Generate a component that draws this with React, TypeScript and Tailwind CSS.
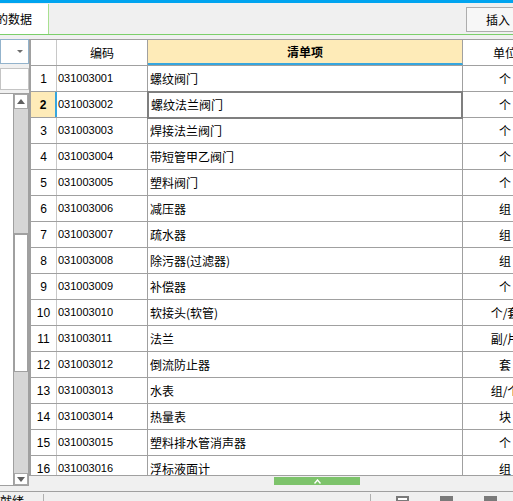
import React from "react";

const rows: [string, string, string][] = [
  ["031003001", "螺纹阀门", "个"],
  ["031003002", "螺纹法兰阀门", "个"],
  ["031003003", "焊接法兰阀门", "个"],
  ["031003004", "带短管甲乙阀门", "个"],
  ["031003005", "塑料阀门", "个"],
  ["031003006", "减压器", "组"],
  ["031003007", "疏水器", "组"],
  ["031003008", "除污器(过滤器)", "组"],
  ["031003009", "补偿器", "个"],
  ["031003010", "软接头(软管)", "个/套"],
  ["031003011", "法兰", "副/片"],
  ["031003012", "倒流防止器", "套"],
  ["031003013", "水表", "组/个"],
  ["031003014", "热量表", "块"],
  ["031003015", "塑料排水管消声器", "个"],
  ["031003016", "浮标液面计", "组"],
];

const cjk = { fontFamily: '"Noto Sans CJK SC", "Liberation Sans", sans-serif' };
const num = { fontFamily: '"Liberation Sans", Arial, sans-serif' };

export default function App() {
  return (
    <div
      className="w-[513px] h-[501px] overflow-hidden bg-[#f0f0f0] flex flex-col text-black"
      style={cjk}
    >
      {/* top blue bar */}
      <div className="h-[3px] bg-[#00a4ef] shrink-0" />
      {/* tab bar */}
      <div className="h-[32px] shrink-0 flex border-b border-[#7ccf6a]">
        <div className="mt-[1px] h-[30px] w-[49px] shrink-0 bg-white border-r border-[#a8e090] flex items-center overflow-hidden">
          <span className="ml-[-4px] text-[12px] leading-none whitespace-nowrap">的数据</span>
        </div>
        <div className="flex-1" />
        <div className="mt-[4px] h-[25px] w-[60px] mr-[-13px] shrink-0 border border-[#adadad] bg-[#f7f7f7] flex items-center pl-[19px]">
          <span className="text-[12px] leading-none whitespace-nowrap">插入</span>
        </div>
      </div>
      {/* main */}
      <div className="h-[456px] shrink-0 flex">
        {/* left panel */}
        <div className="w-[29px] shrink-0 flex flex-col pt-[4px]">
          <div className="h-[25px] w-[29px] border border-[#93b3cc] bg-white flex items-center justify-end pr-[5px]">
            <svg width="6" height="4" viewBox="0 0 6 4">
              <path d="M0 0 L6 0 L3 3 Z" fill="#6d6d6d" />
            </svg>
          </div>
          <div className="mt-[4px] h-[22px] w-[29px] border border-[#c4c4c4] bg-white" />
          <div className="mt-[3px] h-[393px] w-[29px] border-y border-r border-[#a0a0a0] bg-white flex">
            <div className="w-[13px] shrink-0 bg-white" />
            <div className="w-[15px] shrink-0 border-l border-[#a0a0a0] bg-[#d6d6d6] flex flex-col">
              <div className="h-[15px] shrink-0 bg-white border border-[#a8a8a8] flex items-center justify-center">
                <svg width="8" height="5" viewBox="0 0 8 5">
                  <path d="M0 5 L8 5 L4 0 Z" fill="#606060" />
                </svg>
              </div>
              <div className="h-[124px] shrink-0" />
              <div className="h-[139px] shrink-0 bg-white border-t-2 border-x border-b border-[#a0a0a0]" />
              <div className="flex-1" />
              <div className="h-[12px] shrink-0 bg-white border border-[#a8a8a8] flex items-center justify-center">
                <svg width="8" height="5" viewBox="0 0 8 5">
                  <path d="M0 0 L8 0 L4 5 Z" fill="#606060" />
                </svg>
              </div>
            </div>
          </div>
        </div>
        {/* grid side */}
        <div className="flex-1 min-w-0 flex flex-col pt-[4px]">
          <div className="h-[437px] shrink-0 border-y border-[#a0a0a0] border-l-2 border-l-[#a0a0a0] overflow-hidden bg-white">
            {/* header */}
            <div className="h-[26px] flex border-b border-[#a0a0a0]">
              <div className="w-[26px] shrink-0 border-r border-[#c8c8c8]" />
              <div className="w-[91px] shrink-0 border-r border-[#a0a0a0] flex items-center justify-center text-[12px]">
                编码
              </div>
              <div className="w-[315px] shrink-0 border-r border-[#a0a0a0] bg-[#feebb8] border-b-2 border-b-[#36a6de] flex items-center justify-center text-[12px] font-bold">
                清单项
              </div>
              <div className="w-[84px] shrink-0 flex items-center justify-center text-[12px] whitespace-nowrap">
                单位
              </div>
            </div>
            {rows.map(([code, name, unit], i) => {
              const sel = i === 1;
              return (
                <div key={code} className="h-[26px] flex border-b border-[#a0a0a0]">
                  <div
                    className={
                      sel
                        ? "w-[26px] shrink-0 border-r-2 border-[#36a6de] bg-[#feebb8] flex items-center justify-center text-[12px] font-bold"
                        : "w-[26px] shrink-0 border-r border-[#c8c8c8] flex items-center justify-center text-[12px]"
                    }
                    style={num}
                  >
                    {i + 1}
                  </div>
                  <div
                    className="w-[91px] shrink-0 border-r border-[#a0a0a0] flex items-center pl-[1px] text-[11px]"
                    style={num}
                  >
                    {code}
                  </div>
                  <div
                    className={
                      sel
                        ? "w-[316px] ml-[-1px] h-[28px] mt-[-1px] shrink-0 border-2 border-[#7f7f7f] flex items-center pl-[2px] text-[12px] whitespace-nowrap relative"
                        : "w-[315px] shrink-0 border-r border-[#a0a0a0] flex items-center pl-[2px] text-[12px] whitespace-nowrap"
                    }
                  >
                    {name}
                  </div>
                  <div className="w-[84px] shrink-0 flex items-center justify-center text-[12px] whitespace-nowrap">
                    {unit}
                  </div>
                </div>
              );
            })}
          </div>
          {/* splitter strip */}
          <div className="h-[15px] shrink-0 flex items-start">
            <div className="ml-[245px] mt-[1px] h-[8px] w-[86px] bg-[#7dc36b] flex items-center justify-center">
              <svg width="7" height="5" viewBox="0 0 7 5">
                <path d="M0.5 4.5 L3.5 1 L6.5 4.5" fill="none" stroke="#ffffff" strokeWidth="1.4" />
              </svg>
            </div>
          </div>
        </div>
      </div>
      {/* status bar */}
      <div className="flex-1 border-t border-[#a0a0a0] flex relative">
        <div className="w-[44px] shrink-0 border-r border-[#b0b0b0] mt-[2px] overflow-hidden">
          <span className="block mt-[1px] text-[12px] leading-none whitespace-nowrap">就绪</span>
        </div>
        <div className="w-[327px] shrink-0 border-r border-[#b0b0b0] mt-[2px]" />
        <div className="flex items-start pt-[4px]">
          <div className="ml-[25px] w-[13px] h-[6px] border-2 border-[#7a7a7a] bg-white" />
          <div className="ml-[31px] w-[13px] h-[6px] bg-[#7a7a7a]" />
          <div className="ml-[31px] w-[13px] h-[6px] bg-[#7a7a7a]" />
        </div>
      </div>
    </div>
  );
}
